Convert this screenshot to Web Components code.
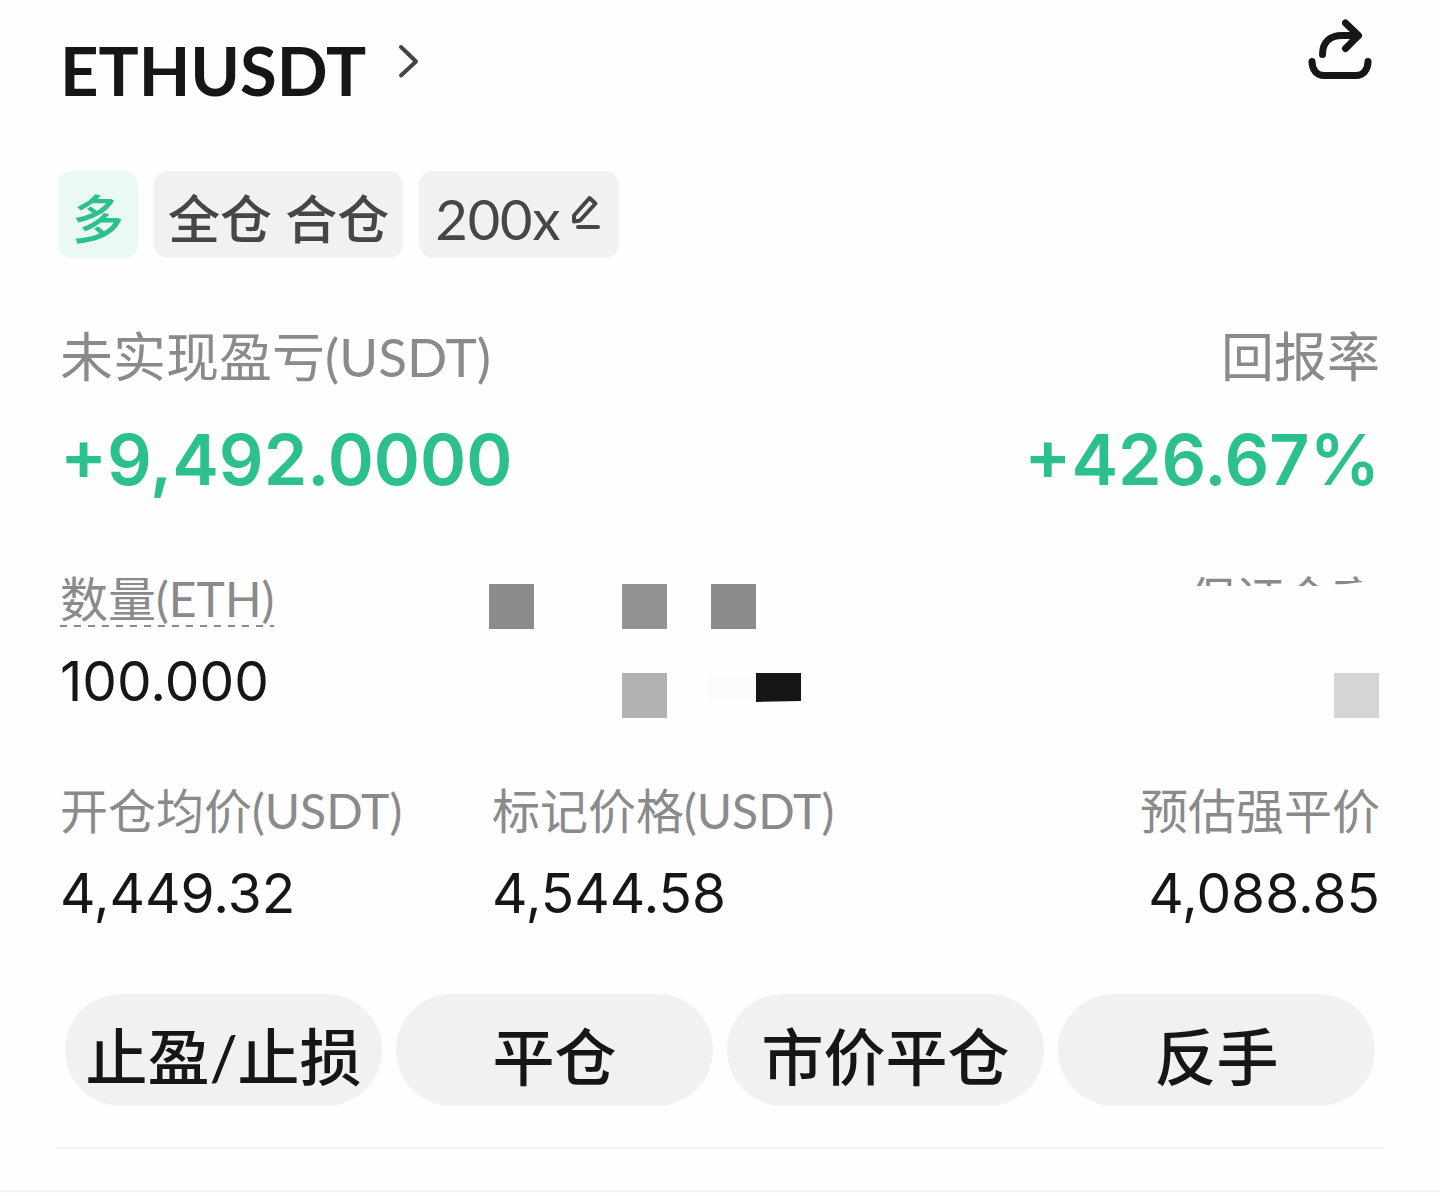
<!DOCTYPE html>
<html lang="zh-CN">
<head>
<meta charset="UTF-8">
<meta name="viewport" content="width=device-width, initial-scale=1.0">
<title>ETHUSDT</title>
<style>
    body {
        margin: 0;
        background-color: #fefefe;
        color: #161616;
        font-family: Lato, "Noto Sans CJK SC", sans-serif;
    }
</style>
</head>
<body>
<position-card>
    <position-header slot="header" symbol="ETHUSDT"></position-header>

    <position-tag slot="tags" kind="long">多</position-tag>
    <position-tag slot="tags">全仓 合仓</position-tag>
    <position-tag slot="tags" editable>200x</position-tag>

    <stat-item slot="summary" size="large" label="未实现盈亏(USDT)">+9,492.0000</stat-item>
    <stat-item slot="summary" size="large" align="end" label="回报率">+426.67%</stat-item>

    <stat-item slot="details" hint label="数量(ETH)">100.000</stat-item>
    <masked-stat slot="details" kind="margin"></masked-stat>
    <masked-stat slot="details" kind="rate" label="保证金率"></masked-stat>
    <stat-item slot="details" label="开仓均价(USDT)">4,449.32</stat-item>
    <stat-item slot="details" label="标记价格(USDT)">4,544.58</stat-item>
    <stat-item slot="details" align="end" label="预估强平价">4,088.85</stat-item>

    <action-button slot="actions">止盈/止损</action-button>
    <action-button slot="actions">平仓</action-button>
    <action-button slot="actions">市价平仓</action-button>
    <action-button slot="actions">反手</action-button>
</position-card>

<script>
class PositionCard extends HTMLElement {

    constructor() {
        super();
        this.attachShadow({ mode: 'open' });
        this.shadowRoot.innerHTML = `
        <style>
        :host {
            display: block;
            padding-top: 16px;
            border-bottom: 2px solid #f2f2f2;
        }

        .content {
            padding: 0 60px;
        }

        .tags {
            display: flex;
            gap: 16px;
            margin: 47px -2px 0;
        }

        .summary {
            display: flex;
            justify-content: space-between;
            margin-top: 66px;
        }

        .details {
            display: grid;
            grid-template-columns: 18fr 19fr 18fr;
            row-gap: 66px;
            margin-top: 69px;
        }

        .actions {
            display: grid;
            grid-template-columns: repeat(4, 1fr);
            gap: 14px;
            margin-top: 65px;
            padding: 0 5px;
        }

        .divider {
            height: 2px;
            margin: 41px 56px;
            border: 0;
            background-color: #f2f2f2;
        }
        </style>
        <section class="content">
            <slot name="header"></slot>
            <div class="tags"><slot name="tags"></slot></div>
            <div class="summary"><slot name="summary"></slot></div>
            <div class="details"><slot name="details"></slot></div>
            <div class="actions"><slot name="actions"></slot></div>
        </section>
        <hr class="divider">
`;
    }
}

class PositionHeader extends HTMLElement {

    constructor() {
        super();
        this.attachShadow({ mode: 'open' });
        this.shadowRoot.innerHTML = `
        <style>
        :host {
            display: flex;
            justify-content: space-between;
            align-items: flex-start;
        }

        h1 {
            margin: 0;
            font-size: 67px;
            font-weight: 700;
            line-height: 108px;
        }

        a {
            display: flex;
            align-items: flex-start;
            gap: 32px;
            color: inherit;
            text-decoration: none;
        }

        .chevron {
            padding-top: 28px;
        }

        button {
            margin-right: 8px;
            padding: 0;
            border: none;
            background: none;
            color: inherit;
            cursor: pointer;
        }

        svg {
            display: block;
        }
        </style>
        <h1>
            <a href="#">
                <span>${this.getAttribute('symbol')}</span>
                <svg class="chevron" width="22" height="36" viewBox="0 0 22 36" fill="none" stroke="#444" stroke-width="4" stroke-linecap="round" stroke-linejoin="round">
                    <path d="M3 3l15 14.500L3 31.500"/>
                </svg>
            </a>
        </h1>
        <button type="button" aria-label="分享">
            <svg width="64" height="64" viewBox="0 0 64 64" fill="none" stroke="currentColor" stroke-width="7" stroke-linecap="round" stroke-linejoin="round">
                <path d="M4 45.500C4 54 9 59.500 16 59.500H48C55 59.500 60 54 60 45.500"/>
                <path d="M14.500 38.500C14.500 26 22 19.500 34 19.500H50"/>
                <path d="M37.500 7L50.500 19.500L37.500 32.500"/>
            </svg>
        </button>
`;
    }
}

class PositionTag extends HTMLElement {

    constructor() {
        super();
        this.attachShadow({ mode: 'open' });
        const pencil = `
            <button type="button" aria-label="调整杠杆">
                <svg width="30" height="36" viewBox="0 0 30 36" fill="none" stroke="currentColor" stroke-width="4" stroke-linejoin="round">
                    <path d="M3 20.500L18.500 3L24.500 8.500L9 25.500L3 26.500Z"/>
                    <path d="M7 32H27" stroke-linecap="round"/>
                </svg>
            </button>`;
        this.shadowRoot.innerHTML = `
        <style>
        :host {
            display: flex;
            gap: 10px;
            height: 79px;
            padding: 8px 14px 0;
            border-radius: 14px;
            background-color: #f1f1f1;
            color: #464646;
            font-size: 52px;
            font-weight: 500;
            line-height: 80px;
        }

        :host([kind="long"]) {
            background-color: #eafaf3;
            color: #2bc08e;
        }

        :host([editable]) {
            padding: 8px 18px 0 16px;
            font-size: 56px;
            font-weight: 400;
        }

        button {
            align-self: flex-start;
            margin-top: 16px;
            padding: 0;
            border: none;
            background: none;
            color: inherit;
            cursor: pointer;
        }

        svg {
            display: block;
        }
        </style>
        <span><slot></slot></span>
        ${this.hasAttribute('editable') ? pencil : ''}
`;
    }
}

class StatItem extends HTMLElement {

    constructor() {
        super();
        this.attachShadow({ mode: 'open' });
        this.shadowRoot.innerHTML = `
        <style>
        :host {
            display: flex;
            flex-direction: column;
            align-items: flex-start;
            gap: 18px;
            white-space: nowrap;
        }

        :host([align="end"]) {
            align-items: flex-end;
        }

        .label {
            color: #8a8a8a;
            font-size: 48px;
            line-height: 56px;
        }

        .value {
            font-family: Inter, sans-serif;
            font-size: 55px;
            line-height: 72px;
        }

        /* Dashed line marks a label with an explanation */
        :host([hint]) .label {
            background: repeating-linear-gradient(90deg, #8a8a8a 0 7px, transparent 7px 14px) bottom / 100% 2px no-repeat;
        }

        :host([size="large"]) {
            gap: 28px;
        }

        :host([size="large"]) .label {
            font-size: 53px;
            line-height: 66px;
        }

        :host([size="large"]) .value {
            color: #2bc08e;
            font-size: 70px;
            font-weight: 600;
            line-height: 84px;
        }
        </style>
        <span class="label">${this.getAttribute('label')}</span>
        <span class="value"><slot></slot></span>
`;
    }
}

class MaskedStat extends HTMLElement {

    constructor() {
        super();
        this.attachShadow({ mode: 'open' });
        const margin = `
            <svg width="320" height="144" viewBox="0 0 320 144">
                <path fill="#fbfbfb" d="M216 104h48v26h-48z"/>
                <path fill="#8b8b8b" d="M-3 13h45v45h-45zM219 13h45v45h-45z"/>
                <path fill="#939395" d="M130 13h45v45h-45z"/>
                <path fill="#b2b2b2" d="M130 102h45v45h-45z"/>
                <path fill="#161616" d="M264 102h45v28l-45 1z"/>
            </svg>`;
        const rate = `
            <span class="label">${this.getAttribute('label')}</span>
            <svg width="46" height="42" viewBox="0 0 46 42">
                <path fill="#d5d5d5" d="M0 0h45v45h-45z"/>
            </svg>`;
        this.shadowRoot.innerHTML = `
        <style>
        :host {
            display: flex;
            flex-direction: column;
        }

        :host([kind="rate"]) {
            align-items: flex-end;
            gap: 46px;
        }

        /* Only the upper edge of the label stays visible */
        .label {
            color: #8a8a8a;
            font-size: 48px;
            line-height: 56px;
            clip-path: polygon(0 0, 174px 0, 174px 11px, 150px 14px, 150px 15px, 0 15px);
        }

        svg {
            display: block;
            overflow: visible;
        }
        </style>
        ${this.getAttribute('kind') === 'rate' ? rate : margin}
`;
    }
}

class ActionButton extends HTMLElement {

    constructor() {
        super();
        this.attachShadow({ mode: 'open' });
        this.shadowRoot.innerHTML = `
        <style>
        :host {
            display: block;
        }

        button {
            width: 100%;
            height: 112px;
            padding: 14px 0 0;
            border: none;
            border-radius: 56px;
            background-color: #f1f1f1;
            color: inherit;
            font-family: inherit;
            font-size: 62px;
            font-weight: 500;
            line-height: 98px;
            white-space: nowrap;
            cursor: pointer;
        }
        </style>
        <button type="button"><slot></slot></button>
`;
    }
}

customElements.define('position-card', PositionCard);
customElements.define('position-header', PositionHeader);
customElements.define('position-tag', PositionTag);
customElements.define('stat-item', StatItem);
customElements.define('masked-stat', MaskedStat);
customElements.define('action-button', ActionButton);
</script>
</body>
</html>
